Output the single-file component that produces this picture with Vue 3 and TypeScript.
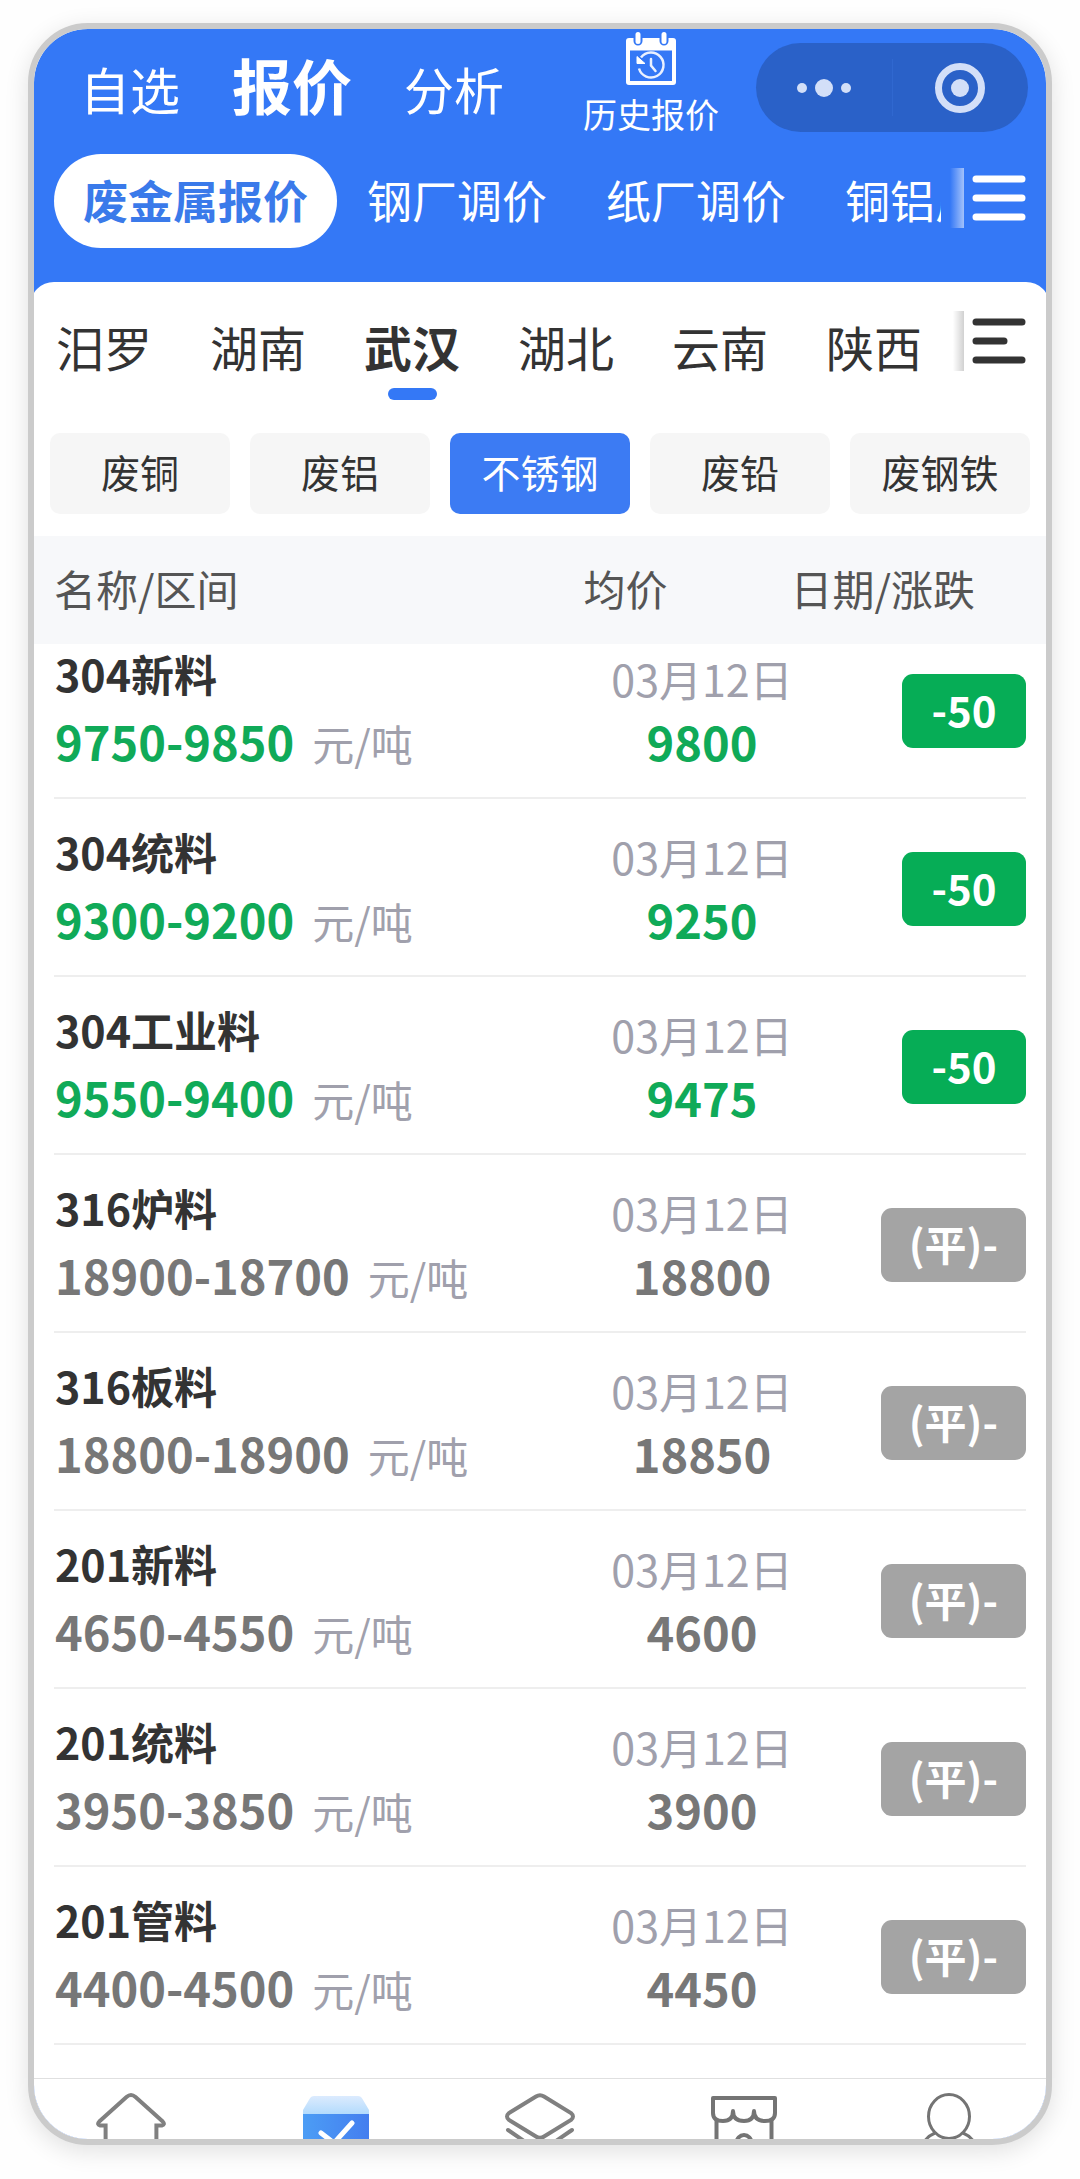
<script setup lang="ts">
import { ref } from 'vue'

interface Quote {
  name: string
  range: string
  average: string
  date: string
  change: string
  trend: 'down' | 'flat'
}

const sections = ['自选', '报价', '分析']
const channels = ['废金属报价', '钢厂调价', '纸厂调价', '铜铝厂调价']
const regions = ['汨罗', '湖南', '武汉', '湖北', '云南', '陕西']
const categories = ['废铜', '废铝', '不锈钢', '废铅', '废钢铁']

const section = ref('报价')
const channel = ref('废金属报价')
const region = ref('武汉')
const category = ref('不锈钢')

const down = (name: string, range: string, average: string): Quote => ({
  name, range, average, date: '03月12日', change: '-50', trend: 'down',
})
const flat = (name: string, range: string, average: string): Quote => ({
  name, range, average, date: '03月12日', change: '(平)-', trend: 'flat',
})

const quotes: Quote[] = [
  down('304新料', '9750-9850', '9800'),
  down('304统料', '9300-9200', '9250'),
  down('304工业料', '9550-9400', '9475'),
  flat('316炉料', '18900-18700', '18800'),
  flat('316板料', '18800-18900', '18850'),
  flat('201新料', '4650-4550', '4600'),
  flat('201统料', '3950-3850', '3900'),
  flat('201管料', '4400-4500', '4450'),
]
</script>

<template>
  <div class="phone">
    <header class="top">
      <div class="title-row">
        <nav class="sections">
          <button
            v-for="s in sections"
            :key="s"
            type="button"
            class="section"
            :class="{ active: s === section }"
            @click="section = s"
          >{{ s }}</button>
        </nav>
        <a class="history" href="#history">
          <svg width="52" height="54" viewBox="0 0 52 54" fill="none" aria-hidden="true">
            <path d="M4 6H48a3 3 0 0 1 3 3V50a3 3 0 0 1-3 3H4a3 3 0 0 1-3-3V9a3 3 0 0 1 3-3Z" fill="#fff" />
            <path d="M5 18.500H47V49H5Z" fill="#3478f6" />
            <path d="M13 3.500V9M39 3.500V9" stroke="#3478f6" stroke-width="9" stroke-linecap="round" />
            <path d="M13 2.500V9.500M39 2.500V9.500" stroke="#fff" stroke-width="5" stroke-linecap="round" />
            <path d="M16 25.500A12.500 12.500 0 1 1 14 36.500" stroke="#eaf1ff" stroke-width="2.500" />
            <path d="M12 24.500V31.500H20Z" fill="#fff" stroke="#fff" />
            <path d="M26 27V33.500L30.500 39" stroke="#eaf1ff" stroke-width="2.500" stroke-linecap="round" />
          </svg>
          <span>历史报价</span>
        </a>
        <div class="capsule">
          <button type="button" aria-label="更多">
            <svg width="54" height="20" viewBox="0 0 54 20" fill="#d3dff8" aria-hidden="true">
              <circle cx="5" cy="10" r="5" />
              <circle cx="27" cy="10" r="9" />
              <circle cx="49" cy="10" r="5" />
            </svg>
          </button>
          <button type="button" aria-label="关闭">
            <svg width="52" height="52" viewBox="0 0 52 52" fill="none" aria-hidden="true">
              <circle cx="26" cy="26" r="21.500" stroke="#d3dff8" stroke-width="7" />
              <circle cx="26" cy="26" r="9" fill="#d3dff8" />
            </svg>
          </button>
        </div>
      </div>
      <div class="channel-row">
        <nav class="channels">
          <button
            v-for="c in channels"
            :key="c"
            type="button"
            class="channel"
            :class="{ active: c === channel }"
            @click="channel = c"
          >{{ c }}</button>
        </nav>
        <div class="more light">
          <button type="button" aria-label="全部频道">
            <svg width="54" height="46" viewBox="0 0 54 46" aria-hidden="true">
              <path d="M4 4H50M4 23H50M4 42H50" stroke="#fff" stroke-width="7" stroke-linecap="round" />
            </svg>
          </button>
        </div>
      </div>
    </header>

    <main class="panel">
      <div class="region-row">
        <nav class="regions">
          <button
            v-for="r in regions"
            :key="r"
            type="button"
            class="region"
            :class="{ active: r === region }"
            @click="region = r"
          >{{ r }}</button>
        </nav>
        <div class="more dark">
          <button type="button" aria-label="全部地区">
            <svg width="54" height="46" viewBox="0 0 54 46" aria-hidden="true">
              <path d="M4 4H50M4 23H32M4 42H50" stroke="#333" stroke-width="7" stroke-linecap="round" />
            </svg>
          </button>
        </div>
      </div>

      <div class="categories">
        <button
          v-for="c in categories"
          :key="c"
          type="button"
          class="category"
          :class="{ active: c === category }"
          @click="category = c"
        >{{ c }}</button>
      </div>

      <table class="quotes">
        <thead>
          <tr>
            <th scope="col">名称/区间</th>
            <th scope="col">均价</th>
            <th scope="col">日期/涨跌</th>
          </tr>
        </thead>
        <tbody>
          <tr v-for="q in quotes" :key="q.name" :class="q.trend">
            <td class="item">
              <span class="name">{{ q.name }}</span>
              <span class="price">{{ q.range }}<span class="unit">元/吨</span></span>
            </td>
            <td class="average">
              <span class="date">{{ q.date }}</span>
              <span class="price">{{ q.average }}</span>
            </td>
            <td class="change"><span class="badge">{{ q.change }}</span></td>
          </tr>
        </tbody>
      </table>
    </main>

    <nav class="tabbar">
      <a href="#home" aria-label="首页">
        <svg width="72" height="64" viewBox="0 0 72 64" fill="none" stroke="#808080" stroke-width="4" aria-hidden="true">
          <path d="M10.600 64V46.500H5.200Q1.500 45.500 4.300 42.500L31.500 18Q36 14 40.500 18L67.700 42.500Q70.500 45.500 66.800 46.500H61.400V64" />
        </svg>
      </a>
      <a href="#quotes" aria-label="报价">
        <svg width="72" height="64" viewBox="0 0 72 64" fill="none" aria-hidden="true">
          <defs>
            <linearGradient id="lid" x1="0" y1="0" x2="0" y2="1">
              <stop offset="0" stop-color="#dcebfe" />
              <stop offset="1" stop-color="#b0dafd" />
            </linearGradient>
            <linearGradient id="box" x1="0" y1="0" x2="1" y2="0">
              <stop offset="0" stop-color="#4c9df5" />
              <stop offset="1" stop-color="#447eef" />
            </linearGradient>
          </defs>
          <path d="M14 17H58Q61 17 62.500 20L69 31V36H3V31L9.500 20Q11 17 14 17Z" fill="url(#lid)" />
          <path d="M3 35H69V64H3Z" fill="url(#box)" />
          <path d="M21 54L34 64L52 44" stroke="#fff" stroke-width="5" stroke-linecap="round" />
        </svg>
      </a>
      <a href="#market" aria-label="行情">
        <svg width="72" height="64" viewBox="0 0 72 64" fill="none" stroke="#808080" stroke-width="4" stroke-linecap="round" aria-hidden="true">
          <path d="M32 17.500Q36 15 40 17.500L67 34Q71 37.500 67 41L40 57.500Q36 60 32 57.500L5 41Q1 37.500 5 34Z" />
          <path d="M4 51L20 62M68 51L52 62" />
        </svg>
      </a>
      <a href="#shop" aria-label="商城">
        <svg width="72" height="64" viewBox="0 0 72 64" fill="none" stroke="#747474" stroke-width="4" stroke-linejoin="round" aria-hidden="true">
          <path d="M5 19H67V34Q67 42 57 42Q46 42 46 32Q46 42 36 42Q25 42 25 32Q25 42 15 42Q5 42 5 34Z" />
          <path d="M8.500 40V64M63.500 40V64M28.500 64a7.500 8 0 0 1 15 0" />
        </svg>
      </a>
      <a href="#me" aria-label="我的">
        <svg width="72" height="64" viewBox="0 0 72 64" fill="none" stroke="#747474" stroke-width="3" aria-hidden="true">
          <ellipse cx="36" cy="37.500" rx="20.500" ry="22" />
          <path d="M11 63Q15 57 22 54M61 63Q57 57 50 54" />
        </svg>
      </a>
    </nav>
  </div>
</template>

<style>
body {
  margin: 0;
  background: #fefefe;
}
</style>

<style scoped>
.phone {
  box-sizing: border-box;
  margin: 23px 28px 34px;
  border: 6px solid #cbcbcb;
  border-radius: 60px;
  overflow: hidden;
  background: #3478f6;
  background-clip: padding-box;
  box-shadow: 0 6px 24px rgba(0, 0, 0, 0.12);
  color: #333;
  font-family: "Noto Sans CJK SC", "Noto Sans", sans-serif;
}

button {
  margin: 0;
  padding: 0;
  border: 0;
  background: none;
  color: inherit;
  font: inherit;
  white-space: nowrap;
  cursor: pointer;
}

a {
  color: inherit;
  text-decoration: none;
}

svg {
  display: block;
}

.top {
  padding-bottom: 34px;
  color: #fff;
}

.title-row {
  display: flex;
  align-items: flex-start;
  height: 125px;
  padding: 0 18px 0 46px;
}

.sections {
  display: flex;
  align-items: baseline;
  gap: 52px;
  padding-top: 25px;
}

.section {
  font-size: 50px;
  line-height: 60px;
}

.section.active {
  font-size: 60px;
  font-weight: 700;
}

.history {
  display: flex;
  flex-direction: column;
  align-items: center;
  gap: 8px;
  margin: 3px 37px 0 auto;
  font-size: 34px;
  line-height: 40px;
}

.capsule {
  display: flex;
  align-items: center;
  width: 272px;
  height: 89px;
  margin-top: 14px;
  border-radius: 45px;
  background: #2a61c8;
}

.capsule button {
  display: flex;
  flex: 1;
  align-items: center;
  justify-content: center;
  height: 57px;
}

.capsule button + button {
  border-left: 1px solid #3068d0;
}

.channel-row {
  display: flex;
  align-items: flex-start;
  padding: 0 20px;
}

.channels,
.regions {
  display: flex;
  flex: 1;
  min-width: 0;
  overflow: hidden;
}

.channels {
  gap: 1px;
}

.channel {
  flex: none;
  padding: 0 29px 2px;
  border-radius: 47px;
  font-size: 45px;
  line-height: 92px;
}

.channel.active {
  background: #fff;
  color: #3a7aea;
  font-weight: 700;
}

.more {
  display: flex;
  flex: none;
  align-items: center;
  gap: 8px;
  height: 60px;
  margin-left: 9px;
}

.more::before {
  content: "";
  width: 14px;
  height: 60px;
}

.more.light {
  margin-top: 14px;
}

.more.light::before {
  background: linear-gradient(90deg, rgba(255, 255, 255, 0), rgba(255, 255, 255, 0.55));
}

.more.dark::before {
  background: linear-gradient(90deg, rgba(0, 0, 0, 0) 20%, rgba(0, 0, 0, 0.18));
}

.panel {
  margin: 0 -4px;
  padding: 29px 4px 33px;
  border-radius: 24px 24px 0 0;
  background: #fff;
}

.region-row {
  display: flex;
  align-items: flex-start;
  padding: 0 20px 0 22px;
}

.regions {
  gap: 58px;
  padding-top: 5px;
}

.region {
  display: flex;
  flex: none;
  flex-direction: column;
  align-items: center;
  gap: 12px;
  font-size: 48px;
  line-height: 60px;
}

.region::after {
  content: "";
  width: 49px;
  height: 12px;
  border-radius: 6px;
}

.region.active {
  font-weight: 700;
}

.region.active::after {
  background: #3478f6;
}

.categories {
  display: flex;
  gap: 20px;
  padding: 33px 16px 22px;
}

.category {
  flex: 1;
  padding-bottom: 5px;
  border-radius: 10px;
  background: #f6f6f6;
  font-size: 39px;
  line-height: 76px;
}

.category.active {
  background: #3c7bf3;
  color: #fff;
}

.quotes,
.quotes thead,
.quotes tbody {
  display: block;
}

.quotes th,
.quotes td {
  padding: 0;
  text-align: left;
  white-space: nowrap;
}

.quotes thead tr {
  display: grid;
  grid-template-columns: 1fr auto auto;
  column-gap: 123px;
  padding: 0 71px 4px 20px;
  background: #f7f8fa;
}

.quotes th {
  color: #555;
  font-size: 42px;
  font-weight: 400;
  line-height: 104px;
}

.quotes tbody {
  padding: 0 20px;
}

.quotes tbody tr {
  display: grid;
  grid-template-columns: 1fr 180px 234px;
  padding: 24px 0;
  border-bottom: 2px solid #eee;
}

.quotes tbody tr:first-child {
  padding-top: 1px;
}

.item,
.average {
  display: flex;
  flex-direction: column;
  justify-content: flex-end;
}

.item {
  gap: 8px;
}

.quotes .item {
  padding-left: 1px;
}

.average {
  gap: 3px;
  align-items: center;
}

.name {
  font-size: 43px;
  font-weight: 700;
  line-height: 56px;
}

.date {
  color: #a0a0ac;
  font-size: 43px;
  line-height: 56px;
}

.price {
  color: #777;
  font-size: 47px;
  font-weight: 700;
  line-height: 64px;
}

.down .price {
  color: #10aa58;
}

.price .unit,
.down .price .unit {
  margin-left: 18px;
  color: #a0a0ac;
  font-size: 42px;
  font-weight: 400;
  line-height: 42px;
}

.change {
  display: flex;
  align-items: center;
  justify-content: flex-end;
}

.quotes .change {
  padding-top: 4px;
}

.badge {
  box-sizing: border-box;
  min-width: 124px;
  padding: 0 28px 4px;
  border-radius: 11px;
  background: #a4a4a4;
  color: #fff;
  font-size: 42px;
  font-weight: 700;
  line-height: 70px;
  text-align: center;
}

.down .badge {
  background: #06ad56;
}

.tabbar {
  display: flex;
  height: 60px;
  margin: 0 -5px;
  overflow: hidden;
  border-top: 1px solid #e0e0e0;
  background: #fff;
}

.tabbar a {
  display: flex;
  flex: 1;
  justify-content: center;
}
</style>
